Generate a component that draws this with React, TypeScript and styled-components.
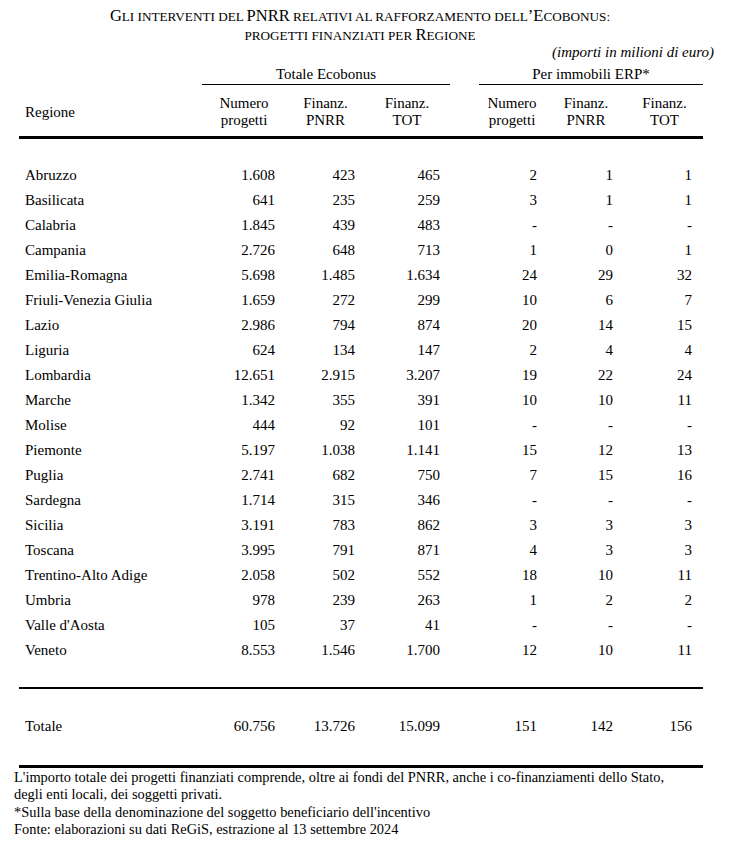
import styled, { createGlobalStyle } from "styled-components";

const GlobalStyle = createGlobalStyle`
  body {
    margin: 0;
    background: #fff;
    color: #000;
    font-family: "Liberation Serif", "Times New Roman", serif;
  }
`;

const COLS = "183px 78px 80px 90px 29px 66px 75px 83px";

// per data column: right padding for numbers, left offset for the centred header
const numCols = [
  { col: 2, pr: 5, hl: 6 },
  { col: 3, pr: 5, hl: 11 },
  { col: 4, pr: 10, hl: 4 },
  { col: 6, pr: 8, hl: 0 },
  { col: 7, pr: 7, hl: 7 },
  { col: 8, pr: 11, hl: 6 },
];

const Page = styled.div`
  width: 754px;
  box-sizing: border-box;
  padding: 6px 40px 0 14px;
`;

const Title = styled.h1`
  margin: 0;
  font-size: 16.5px;
  font-weight: normal;
  line-height: 19px;
  text-align: center;
  padding-right: 8px;
`;

// lower-case letters of the title are set as smaller capitals
const Small = styled.span`
  font-size: 13.2px;
  line-height: 12px;
  text-transform: uppercase;
`;

const Unit = styled.div`
  font-style: italic;
  font-size: 15px;
  line-height: 16px;
  text-align: right;
`;

const Table = styled.div`
  width: 684px;
  margin-left: 5px;
  font-size: 15px;
`;

const Row = styled.div`
  display: grid;
  grid-template-columns: ${COLS};
`;

const GroupRow = styled(Row)`
  padding-top: 4px;
`;

const GroupHead = styled.div<{ $start: number }>`
  grid-column: ${(p) => p.$start} / span 3;
  text-align: center;
  line-height: 20px;
  border-bottom: 1px solid #000;
`;

const HeadRow = styled(Row)`
  padding: 10px 0 7px;
  border-bottom: 3px solid #000;
`;

const RegionHead = styled.div`
  grid-column: 1;
  align-self: center;
  padding-left: 6px;
`;

const ColHead = styled.div<{ $col: number; $hl: number }>`
  grid-column: ${(p) => p.$col};
  text-align: center;
  line-height: 17px;
  padding-left: ${(p) => p.$hl}px;
`;

const Body = styled.div<{ $top: number; $bottom: number; $rule: number }>`
  padding: ${(p) => p.$top}px 0 ${(p) => p.$bottom}px;
  border-bottom: ${(p) => p.$rule}px solid #000;
`;

const DataRow = styled(Row)`
  height: 25px;
  align-items: center;
`;

const Name = styled.div`
  grid-column: 1;
  padding-left: 6px;
  white-space: nowrap;
`;

const Num = styled.div<{ $col: number; $pr: number }>`
  grid-column: ${(p) => p.$col};
  text-align: right;
  padding-right: ${(p) => p.$pr}px;
`;

const Notes = styled.div`
  font-size: 14.4px;
  line-height: 17.3px;
  padding-top: 1px;
`;

const rows: [string, ...string[]][] = [
  ["Abruzzo", "1.608", "423", "465", "2", "1", "1"],
  ["Basilicata", "641", "235", "259", "3", "1", "1"],
  ["Calabria", "1.845", "439", "483", "-", "-", "-"],
  ["Campania", "2.726", "648", "713", "1", "0", "1"],
  ["Emilia-Romagna", "5.698", "1.485", "1.634", "24", "29", "32"],
  ["Friuli-Venezia Giulia", "1.659", "272", "299", "10", "6", "7"],
  ["Lazio", "2.986", "794", "874", "20", "14", "15"],
  ["Liguria", "624", "134", "147", "2", "4", "4"],
  ["Lombardia", "12.651", "2.915", "3.207", "19", "22", "24"],
  ["Marche", "1.342", "355", "391", "10", "10", "11"],
  ["Molise", "444", "92", "101", "-", "-", "-"],
  ["Piemonte", "5.197", "1.038", "1.141", "15", "12", "13"],
  ["Puglia", "2.741", "682", "750", "7", "15", "16"],
  ["Sardegna", "1.714", "315", "346", "-", "-", "-"],
  ["Sicilia", "3.191", "783", "862", "3", "3", "3"],
  ["Toscana", "3.995", "791", "871", "4", "3", "3"],
  ["Trentino-Alto Adige", "2.058", "502", "552", "18", "10", "11"],
  ["Umbria", "978", "239", "263", "1", "2", "2"],
  ["Valle d'Aosta", "105", "37", "41", "-", "-", "-"],
  ["Veneto", "8.553", "1.546", "1.700", "12", "10", "11"],
];

const total: [string, ...string[]] = ["Totale", "60.756", "13.726", "15.099", "151", "142", "156"];

const headers = [
  ["Numero", "progetti"],
  ["Finanz.", "PNRR"],
  ["Finanz.", "TOT"],
  ["Numero", "progetti"],
  ["Finanz.", "PNRR"],
  ["Finanz.", "TOT"],
];

// split text into runs of capitals (full size) and the rest (small caps)
function SmallCaps({ text }: { text: string }) {
  const parts = text.match(/[A-Z’]+|[^A-Z’]+/g) ?? [];
  return (
    <>
      {parts.map((p, i) =>
        /[A-Z’]/.test(p[0]) ? <span key={i}>{p}</span> : <Small key={i}>{p}</Small>
      )}
    </>
  );
}

function Line({ cells }: { cells: [string, ...string[]] }) {
  const [name, ...values] = cells;
  return (
    <DataRow>
      <Name>{name}</Name>
      {values.map((v, i) => (
        <Num key={i} $col={numCols[i].col} $pr={numCols[i].pr}>
          {v}
        </Num>
      ))}
    </DataRow>
  );
}

export default function App() {
  return (
    <>
      <GlobalStyle />
      <Page>
        <Title>
          <SmallCaps text="Gli interventi del PNRR relativi al rafforzamento dell’Ecobonus:" />
          <br />
          <SmallCaps text="progetti finanziati per Regione" />
        </Title>
        <Unit>(importi in milioni di euro)</Unit>

        <Table>
          <GroupRow>
            <GroupHead $start={2}>Totale Ecobonus</GroupHead>
            <GroupHead $start={6}>Per immobili ERP*</GroupHead>
          </GroupRow>

          <HeadRow>
            <RegionHead>Regione</RegionHead>
            {headers.map(([a, b], i) => (
              <ColHead key={i} $col={numCols[i].col} $hl={numCols[i].hl}>
                {a}
                <br />
                {b}
              </ColHead>
            ))}
          </HeadRow>

          <Body $top={23.5} $bottom={24.5} $rule={2}>
            {rows.map((r) => (
              <Line key={r[0]} cells={r} />
            ))}
          </Body>

          <Body $top={24.5} $bottom={26.5} $rule={3}>
            <Line cells={total} />
          </Body>
        </Table>

        <Notes>
          L'importo totale dei progetti finanziati comprende, oltre ai fondi del PNRR, anche i co-finanziamenti dello Stato,
          <br />
          degli enti locali, dei soggetti privati.
          <br />
          *Sulla base della denominazione del soggetto beneficiario dell'incentivo
          <br />
          Fonte: elaborazioni su dati ReGiS, estrazione al 13 settembre 2024
        </Notes>
      </Page>
    </>
  );
}
